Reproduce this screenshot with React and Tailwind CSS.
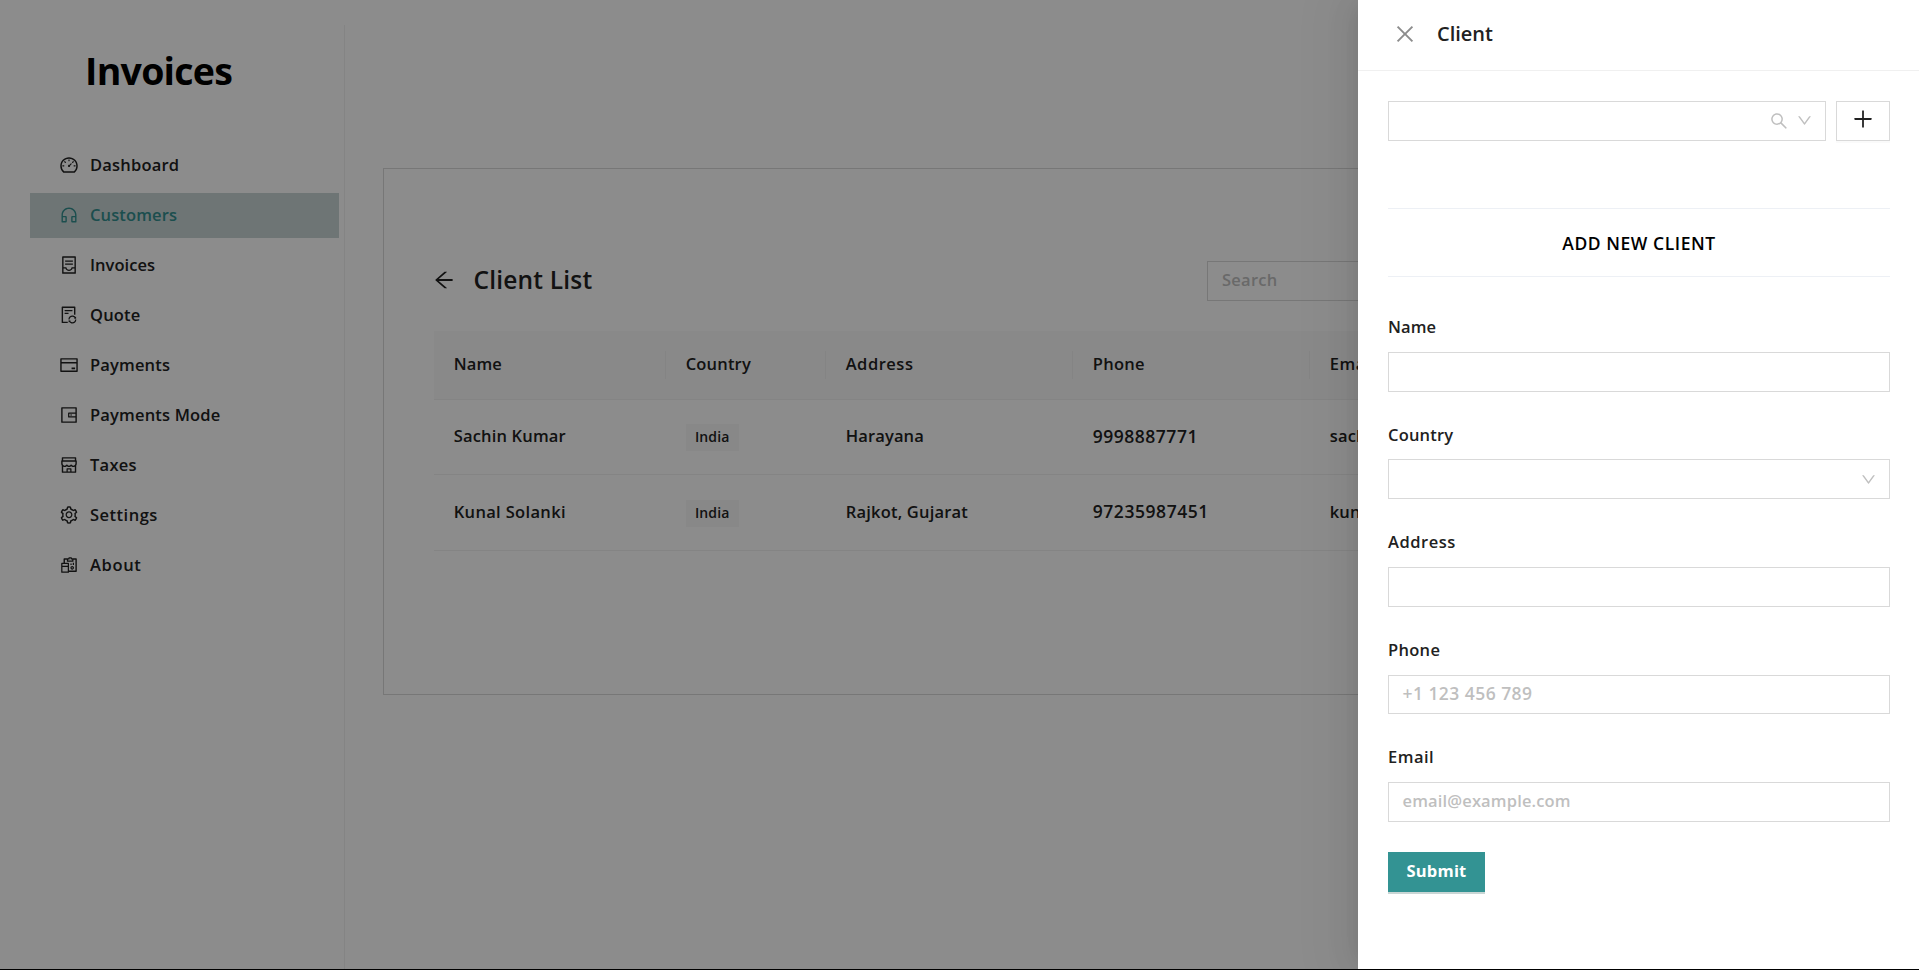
import React from "react";
import {
  AiOutlineDashboard,
  AiOutlineCustomerService,
  AiOutlineContainer,
  AiOutlineFileSync,
  AiOutlineCreditCard,
  AiOutlineWallet,
  AiOutlineShop,
  AiOutlineSetting,
  AiOutlineReconciliation,
  AiOutlineArrowLeft,
  AiOutlineClose,
  AiOutlineSearch,
  AiOutlineDown,
  AiOutlinePlus,
} from "react-icons/ai";

const menu = [
  { label: "Dashboard", Icon: AiOutlineDashboard, track: "tracking-[0.2px]" },
  { label: "Customers", Icon: AiOutlineCustomerService, track: "tracking-[0.13px]", active: true },
  { label: "Invoices", Icon: AiOutlineContainer, track: "tracking-[0.05px]" },
  { label: "Quote", Icon: AiOutlineFileSync, track: "tracking-[0.18px]" },
  { label: "Payments", Icon: AiOutlineCreditCard, track: "tracking-[0.16px]" },
  { label: "Payments Mode", Icon: AiOutlineWallet, track: "tracking-[0.18px]" },
  { label: "Taxes", Icon: AiOutlineShop, track: "tracking-[0.28px]" },
  { label: "Settings", Icon: AiOutlineSetting, track: "tracking-[0.5px]" },
  { label: "About", Icon: AiOutlineReconciliation, track: "tracking-[0.64px]" },
];

const columns = [
  { label: "Name", width: "w-[232px]", track: "tracking-[0.12px]" },
  { label: "Country", width: "w-[160px]", track: "tracking-[0.18px]" },
  { label: "Address", width: "w-[247px]", track: "tracking-[0.52px]" },
  { label: "Phone", width: "w-[237px]", track: "tracking-[0.3px]" },
  { label: "Email", width: "w-[380px]", track: "tracking-[0.5px]" },
];

const rows = [
  {
    height: "h-[75px]",
    cells: [
      ["Sachin Kumar", "tracking-[0.17px]"],
      ["India", ""],
      ["Harayana", "tracking-[0.14px]"],
      ["9998887771", "text-[17.5px] tracking-[0.52px]"],
      ["sachin@gmail.com", "tracking-[0.2px]"],
    ],
  },
  {
    height: "h-[76px]",
    cells: [
      ["Kunal Solanki", "tracking-[0.34px]"],
      ["India", ""],
      ["Rajkot, Gujarat", "tracking-[0.2px]"],
      ["97235987451", "text-[17.5px] tracking-[0.56px]"],
      ["kunal@gmail.com", "tracking-[0.2px]"],
    ],
  },
];

function Sidebar() {
  return (
    <aside className="mt-[25px] h-[945px] w-[345px] shrink-0 border-r border-[#f0f0f0]">
      <h1 className="ml-[85px] mt-[21.5px] text-[37.5px] font-bold leading-[48px] tracking-[-0.75px] text-black">
        Invoices
      </h1>
      <nav className="ml-[30px] mt-[48.5px] flex flex-col gap-[5px]">
        {menu.map(({ label, Icon, track, active }) => (
          <a
            key={label}
            className={
              "flex h-[45px] w-[309px] items-center gap-[11.3px] pb-[1.5px] pl-[28.7px] " +
              (active ? "bg-[#c8d5d5] text-[#338f8f]" : "")
            }
          >
            <Icon className="size-[20px]" />
            <span className={"leading-none " + track}>{label}</span>
          </a>
        ))}
      </nav>
    </aside>
  );
}

function ClientTable() {
  return (
    <section className="ml-[38px] mt-[168px] h-[527px] w-[1460px] shrink-0 border border-[#d9d9d9] px-[50px] pt-[92px]">
      <header className="flex h-[40px] items-center">
        <AiOutlineArrowLeft className="mb-[2px] size-[24px] -ml-[2px]" />
        <h2 className="mb-px ml-[17.5px] w-[733.5px] text-[24.5px] leading-none tracking-[0.2px]">Client List</h2>
        <div className="flex h-[40px] w-[300px] items-center border border-[#d9d9d9] pb-[2px] pl-[14px] tracking-[0.26px] text-[#bfbfbf]">
          Search
        </div>
      </header>
      <div className="mt-[30px] flex h-[69px] w-[1256px] items-center border-b border-[#f0f0f0] bg-[#fafafa]">
        {columns.map(({ label, width, track }, i) => (
          <div
            key={label}
            className={
              "flex h-[28px] shrink-0 items-center pb-px pl-[19.7px] " +
              width +
              (i < columns.length - 1 ? " border-r border-[#f0f0f0]" : "")
            }
          >
            <span className={"leading-none " + track}>{label}</span>
          </div>
        ))}
      </div>
      {rows.map(({ height, cells }) => (
        <div key={cells[0][0]} className={"flex w-[1256px] items-center border-b border-[#f0f0f0] " + height}>
          {cells.map(([text, track], i) => (
            <div key={i} className={"flex shrink-0 items-center pl-[19.7px] " + columns[i].width}>
              {i === 1 ? (
                <span className="mt-px flex h-[27px] w-[53px] items-center justify-center bg-[#f8f8f8] pb-px text-[14px] font-semibold leading-none tracking-[0.1px]">
                  {text}
                </span>
              ) : (
                <span className={"pb-px leading-none " + track}>{text}</span>
              )}
            </div>
          ))}
        </div>
      ))}
    </section>
  );
}

function Field({
  label,
  track,
  placeholder,
  hint,
  select,
  labelPad = "",
  boxHeight = "h-[40px]",
  gap = "mb-[28px]",
}) {
  return (
    <div className={"flex shrink-0 flex-col " + gap}>
      <label className={"flex h-[40px] items-start leading-[30px] " + labelPad + " " + track}>{label}</label>
      <div className={"flex items-center justify-between border border-[#d9d9d9] pl-[13.5px] pr-[12.5px] " + boxHeight}>
        <span className={"pb-[2px] leading-none text-[#bfbfbf] " + (hint || "")}>{placeholder}</span>
        {select && <AiOutlineDown className="size-[17px] text-[#bfbfbf]" />}
      </div>
    </div>
  );
}

function Drawer() {
  return (
    <div className="absolute right-0 top-0 flex h-[969px] w-[561px] flex-col bg-white shadow-[-6px_0_16px_-8px_rgba(0,0,0,0.08),-9px_0_28px_0_rgba(0,0,0,0.05),-12px_0_48px_16px_rgba(0,0,0,0.03)]">
      <header className="flex h-[71px] shrink-0 items-center border-b border-[#f0f0f0] pb-[2px] pl-[35px]">
        <AiOutlineClose className="size-[24px] text-[#8c8c8c]" />
        <span className="ml-[20px] text-[20px] leading-none">Client</span>
      </header>
      <div className="flex flex-col pl-[30px] pr-[29px] pt-[30px]">
        <div className="flex gap-[10px]">
          <div className="flex h-[40px] w-[438px] items-center justify-end gap-[6.5px] border border-[#d9d9d9] pb-px pr-[12.5px] text-[#bfbfbf]">
            <AiOutlineSearch className="size-[20px]" />
            <AiOutlineDown className="size-[17px]" />
          </div>
          <button className="flex h-[40px] w-[54px] items-center justify-center border border-[#d9d9d9] pb-[4px] shadow-[0_2px_0_rgba(0,0,0,0.02)]">
            <AiOutlinePlus className="size-[24px]" />
          </button>
        </div>
        <div className="mt-[67px] flex h-[69px] items-center justify-center border-y border-[#edf0f5] pt-px text-[17.5px] tracking-[0.55px] text-black">
          ADD NEW CLIENT
        </div>
        <form className="mt-[35px] flex flex-col">
          <Field label="Name" track="tracking-[0.12px]" gap="mb-[27px]" />
          <Field label="Country" track="tracking-[0.18px]" labelPad="pt-px" select />
          <Field label="Address" track="tracking-[0.52px]" />
          <Field
            label="Phone"
            track="tracking-[0.3px]"
            placeholder="+1 123 456 789"
            hint="text-[17.5px] tracking-[0.45px]"
            boxHeight="h-[39px]"
          />
          <Field
            label="Email"
            track="tracking-[0.5px]"
            placeholder="email@example.com"
            hint="tracking-[0.15px]"
            gap="mb-[30px]"
          />
          <button
            type="button"
            className="h-[40px] w-[97px] bg-[#339393] pb-px font-bold tracking-[0.2px] text-white shadow-[0_2px_0_#c9d6d5]"
          >
            Submit
          </button>
        </form>
      </div>
    </div>
  );
}

export default function App() {
  return (
    <div className="relative h-[970px] w-[1919px] overflow-hidden bg-black font-['Open_Sans','Liberation_Sans',sans-serif] text-[16.5px] font-semibold text-[#212121]">
      <main className="flex h-[969px] overflow-hidden bg-white">
        <Sidebar />
        <ClientTable />
      </main>
      <div className="absolute inset-x-0 top-0 h-[969px] bg-black/45" />
      <Drawer />
    </div>
  );
}
